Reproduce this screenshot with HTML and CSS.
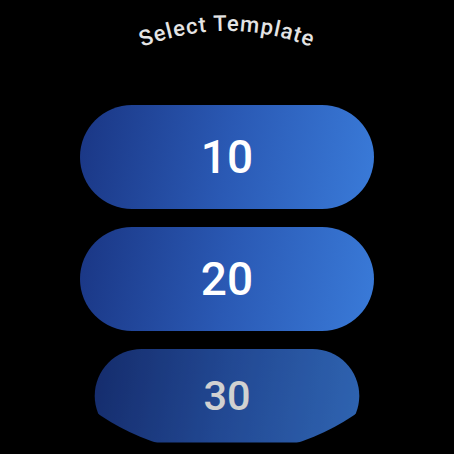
FILE: index.html
```html
<!DOCTYPE html>
<html>
<head>
<meta charset="utf-8">
<link rel="stylesheet" href="styles.css">
</head>
<body>
<div class="screen">
  <svg class="title" width="454" height="105" viewBox="0 0 454 105">
    <defs>
      <path id="arc" d="M 27.8 146 A 230 230 0 0 1 426.2 146"/>
    </defs>
    <text class="title-text"><textPath href="#arc" startOffset="50%" text-anchor="middle">Select Template</textPath></text>
  </svg>
  <div class="list">
    <button class="chip">10</button>
    <button class="chip">20</button>
    <button class="chip chip-far">30</button>
  </div>
</div>
</body>
</html>
```
FILE: styles.css
```css
html, body {
  margin: 0;
  padding: 0;
  background: #000;
}
.screen {
  width: 454px;
  height: 454px;
  background: #000;
  clip-path: circle(227px at 227px 227px);
  overflow: hidden;
  display: flex;
  flex-direction: column;
  align-items: center;
}
.title {
  display: block;
  flex: none;
}
.title-text {
  font-family: Roboto, "Noto Sans", sans-serif;
  font-size: 22px;
  font-weight: 500;
  letter-spacing: 1px;
  fill: #e4e4e4;
}
.list {
  display: flex;
  flex-direction: column;
  align-items: center;
  gap: 18px;
}
.chip {
  width: 294px;
  height: 104px;
  flex: none;
  border: none;
  border-radius: 52px;
  background: linear-gradient(100deg, #1a3684 0%, #2a59b4 50%, #3a7bd9 100%);
  color: #fff;
  font-family: Roboto, "Noto Sans", sans-serif;
  font-size: 46px;
  font-weight: 500;
  display: flex;
  align-items: center;
  justify-content: center;
  padding: 0;
}
.chip-far {
  transform: scale(0.9);
  transform-origin: top center;
  opacity: 0.82;
}
```
